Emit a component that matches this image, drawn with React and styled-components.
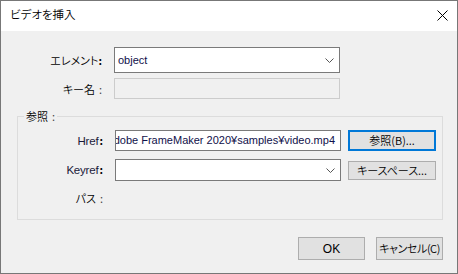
import React from "react";
import styled, { createGlobalStyle } from "styled-components";

const Global = createGlobalStyle`
  html, body { margin: 0; padding: 0; background: #f0f0f0; }
  * { box-sizing: border-box; }
`;

const UI_FONT = `"Noto Sans CJK JP", "Noto Sans", sans-serif`;
const LATIN_FONT = `"Liberation Sans", "Noto Sans CJK JP", sans-serif`;

const Window = styled.div`
  width: 458px;
  height: 274px;
  border: 1px solid #777;
  background: #f0f0f0;
  display: flex;
  flex-direction: column;
  font-family: ${UI_FONT};
  font-size: 11px;
  font-weight: 350;
  font-feature-settings: "palt";
  color: #000;
`;

const TitleBar = styled.div`
  height: 30px;
  flex: none;
  background: #fff;
  display: flex;
  align-items: center;
  justify-content: space-between;
  padding: 0 9px 0 9px;
`;

const TitleText = styled.span`
  font-size: 11.5px;
  line-height: 1;
  padding-bottom: 2px;
`;

const CloseBtn = styled.div`
  width: 12px;
  height: 12px;
  display: flex;
  align-items: center;
  justify-content: center;
  margin-bottom: 1px;
`;

const Body = styled.div`
  flex: 1;
  display: flex;
  flex-direction: column;
  padding: 16px 14px 0 0;
`;

const Row = styled.div`
  display: flex;
  align-items: center;
  height: ${(p) => p.h}px;
  margin-top: ${(p) => p.mt || 0}px;
`;

const Label = styled.div`
  width: ${(p) => p.w}px;
  flex: none;
  text-align: right;
  margin-right: 12px;
  white-space: nowrap;
  line-height: 1;
  padding-top: 1px;
`;

const LatinLabel = styled.span`
  font-family: ${LATIN_FONT};
  font-size: 11.5px;
  font-weight: 400;
  letter-spacing: -0.2px;
  margin-right: 1px;
  color: #1a1a3a;
`;

const Colon = styled.span`
  margin-left: ${(p) => p.gap || 0}px;
  font-weight: ${(p) => (p.bold ? 700 : 400)};
  color: ${(p) => (p.light ? "#444" : "#000")};
`;

const Field = styled.div`
  width: 226px;
  height: 100%;
  flex: none;
  display: flex;
  align-items: center;
  border: 1px solid ${(p) => (p.disabled ? "#cccccc" : "#7a7a7a")};
  background: ${(p) => (p.disabled ? "#f0f0f0" : "#fff")};
  overflow: hidden;
`;

const FieldText = styled.div`
  flex: 1;
  min-width: 0;
  display: flex;
  justify-content: ${(p) => (p.end ? "flex-end" : "flex-start")};
  overflow: hidden;
  white-space: nowrap;
  font-family: ${LATIN_FONT};
  font-size: 11px;
  font-weight: 400;
  padding: 0 5px 0 3px;
  color: #10104a;
  line-height: 1;
`;

const Chevron = styled.svg`
  flex: none;
  margin-right: 5px;
  margin-top: 1px;
`;

const Group = styled.div`
  position: relative;
  margin: 17px 0 0 16px;
  border: 1px solid #dcdcdc;
  height: 104px;
  padding: 13px 7px 0 0;
  display: flex;
  flex-direction: column;
`;

const GroupCaption = styled.div`
  position: absolute;
  top: -8px;
  left: 6px;
  padding: 0 2px;
  background: #f0f0f0;
  line-height: 14px;
`;

const Button = styled.div`
  width: ${(p) => p.w}px;
  height: ${(p) => p.h}px;
  flex: none;
  display: flex;
  align-items: center;
  justify-content: center;
  background: #e1e1e1;
  border: ${(p) => (p.primary ? "2px solid #0078d7" : "1px solid #adadad")};
  font-size: ${(p) => (p.latin ? 12 : 11)}px;
  font-weight: ${(p) => (p.latin ? 400 : 350)};
  line-height: 1;
  white-space: nowrap;
  letter-spacing: ${(p) => p.ls || 0}px;
  margin-left: ${(p) => p.ml || 0}px;
  font-family: ${(p) => (p.latin ? LATIN_FONT : UI_FONT)};
`;

const Footer = styled.div`
  display: flex;
  justify-content: flex-end;
  gap: 11px;
  margin-top: 17px;
`;

const ChevronIcon = () => (
  <Chevron width="9" height="5" viewBox="0 0 9 5">
    <path d="M0.5 0.5 L4.5 4.5 L8.5 0.5" fill="none" stroke="#555" strokeWidth="1" />
  </Chevron>
);

export default function App() {
  return (
    <>
      <Global />
      <Window>
        <TitleBar>
          <TitleText>ビデオを挿入</TitleText>
          <CloseBtn>
            <svg width="11" height="11" viewBox="0 0 11 11">
              <path d="M0.5 0.5 L10.5 10.5 M10.5 0.5 L0.5 10.5" stroke="#000" strokeWidth="1" />
            </svg>
          </CloseBtn>
        </TitleBar>
        <Body>
          <Row h={26}>
            <Label w={101}>
              エレメント<Colon bold>:</Colon>
            </Label>
            <Field>
              <FieldText>object</FieldText>
              <ChevronIcon />
            </Field>
          </Row>
          <Row h={21} mt={5}>
            <Label w={101}>
              キー名<Colon gap={4} light>:</Colon>
            </Label>
            <Field disabled />
          </Row>
          <Group>
            <GroupCaption>
              参照<Colon gap={4} light>:</Colon>
            </GroupCaption>
            <Row h={21}>
              <Label w={85}>
                <LatinLabel>Href</LatinLabel>
                <Colon bold>:</Colon>
              </Label>
              <Field>
                <FieldText end>C:¥Program Files¥Adobe FrameMaker 2020¥samples¥video.mp4</FieldText>
              </Field>
              <Button primary w={88} h={21} ml={7}>
                参照(B)...
              </Button>
            </Row>
            <Row h={22} mt={8}>
              <Label w={85}>
                <LatinLabel>Keyref</LatinLabel>
                <Colon bold>:</Colon>
              </Label>
              <Field>
                <FieldText />
                <ChevronIcon />
              </Field>
              <Button w={88} h={19} ml={7}>
                キースペース...
              </Button>
            </Row>
            <Row h={21} mt={6}>
              <Label w={85}>
                パス<Colon gap={4} light>:</Colon>
              </Label>
            </Row>
          </Group>
          <Footer>
            <Button w={67} h={23} latin>
              OK
            </Button>
            <Button w={67} h={23} ls={-0.4}>
              キャンセル(C)
            </Button>
          </Footer>
        </Body>
      </Window>
    </>
  );
}
